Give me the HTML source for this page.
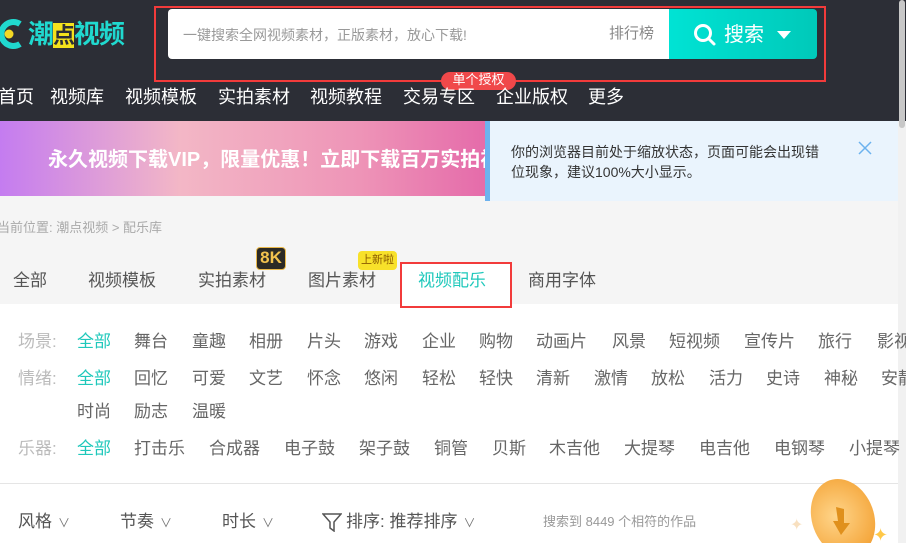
<!DOCTYPE html>
<html style="overflow:hidden;width:906px;height:543px"><head><meta charset="utf-8">
<style>
*{margin:0;padding:0;box-sizing:border-box}
body{width:906px;height:543px;overflow:hidden;background:#f5f5f5;font-family:"Liberation Sans","Noto Sans CJK SC",sans-serif;position:relative}
.a{position:absolute;white-space:nowrap}
#hd{position:absolute;left:0;top:0;width:906px;height:121px;background:#2c2e36}
.nav{top:85px;font-size:18px;color:#fff;line-height:24px}
.f{font-size:17px;color:#666;line-height:22px}
.t{color:#1fc8bb}
.tab{top:270px;font-size:17px;color:#555;line-height:22px}
.ch{font-size:12px;color:#777;margin-left:6px}
</style></head><body>
<div id="hd"></div>
<svg class="a" style="left:0;top:18px" width="24" height="32" viewBox="0 0 24 32"><path d="M20 6 A12 12 0 1 0 20 26" stroke="#20d9cf" stroke-width="6" fill="none"/><circle cx="9" cy="16" r="4.5" fill="#f4d825"/></svg>
<div class="a" style="left:28px;top:17px;font-size:26px;font-weight:bold;color:#20d9cf;line-height:34px;letter-spacing:-1px">潮<span style="background:#f4e21c;color:#2c2e36;font-size:22px">点</span>视频</div>
<div class="a" style="left:154px;top:6px;width:672px;height:76px;border:2px solid #f23b3b"></div>
<div class="a" style="left:168px;top:9px;width:501px;height:50px;background:#fff;border-radius:4px 0 0 4px"></div>
<div class="a" style="left:183px;top:25px;font-size:14px;color:#999;line-height:20px">一键搜索全网视频素材，正版素材，放心下载!</div>
<div class="a" style="left:609px;top:24px;font-size:15px;color:#888;line-height:20px">排行榜</div>
<div class="a" style="left:669px;top:9px;width:148px;height:50px;background:linear-gradient(90deg,#00e3d4,#00c9b9);border-radius:0 4px 4px 0"></div>
<svg class="a" style="left:693px;top:23px" width="24" height="24" viewBox="0 0 24 24"><circle cx="10" cy="10" r="7.5" stroke="#fff" stroke-width="3" fill="none"/><path d="M15.5 15.5 L21 21" stroke="#fff" stroke-width="3" stroke-linecap="round"/></svg>
<div class="a" style="left:724px;top:22px;font-size:20px;color:#fff;line-height:26px">搜索</div>
<div class="a" style="left:777px;top:31px;width:0;height:0;border-left:7px solid transparent;border-right:7px solid transparent;border-top:8px solid #fff"></div>
<div class="a" style="left:441px;top:72px;width:75px;height:18px;background:#f0484a;border-radius:9px;color:#fff;font-size:13px;line-height:16px;text-align:center;overflow:hidden">单个授权</div>
<div class="a nav" style="left:-2px">首页</div>
<div class="a nav" style="left:50px">视频库</div>
<div class="a nav" style="left:125px">视频模板</div>
<div class="a nav" style="left:218px">实拍素材</div>
<div class="a nav" style="left:310px">视频教程</div>
<div class="a nav" style="left:403px">交易专区</div>
<div class="a nav" style="left:496px">企业版权</div>
<div class="a nav" style="left:588px">更多</div>
<div class="a" style="left:0;top:121px;width:900px;height:75px;background:linear-gradient(90deg,#c47cf0 0%,#f3b7c6 20%,#ee94b7 40%,#e468a9 55%,#e468a9 100%)"></div>
<div class="a" style="left:48px;top:147px;font-size:20px;font-weight:bold;color:#fff;line-height:26px">永久视频下载VIP，限量优惠！立即下载百万实拍视</div>
<div class="a" style="left:485px;top:121px;width:413px;height:80px;background:#eaf4fd;border-left:5px solid #6cb2ee"></div>
<div class="a" style="left:511px;top:142px;font-size:14px;color:#333;line-height:20px;white-space:normal;width:312px">你的浏览器目前处于缩放状态，页面可能会出现错位现象，建议100%大小显示。</div>
<svg class="a" style="left:858px;top:141px" width="14" height="14" viewBox="0 0 14 14"><path d="M1 1L13 13M13 1L1 13" stroke="#6cb2ee" stroke-width="1.5"/></svg>
<div class="a" style="left:898px;top:121px;width:8px;height:422px;background:#f1f1f1"></div>
<div class="a" style="left:899px;top:0;width:6px;height:128px;background:#c8c8c8;border-radius:3px"></div>
<div class="a" style="left:-3px;top:219px;font-size:13px;color:#aaa;line-height:18px">当前位置: 潮点视频 &gt; 配乐库</div>
<div class="a" style="left:0;top:304px;width:898px;height:239px;background:#fff"></div>
<div class="a" style="left:400px;top:262px;width:112px;height:46px;background:#fff;border:2px solid #f23b3b"></div>
<div class="a tab" style="left:13px">全部</div>
<div class="a tab" style="left:88px">视频模板</div>
<div class="a tab" style="left:198px">实拍素材</div>
<div class="a tab" style="left:308px">图片素材</div>
<div class="a tab" style="left:418px;color:#1fc8bb">视频配乐</div>
<div class="a tab" style="left:528px">商用字体</div>
<div class="a" style="left:256px;top:247px;width:30px;height:23px;background:#2c2a25;border:1.5px solid #e9b84a;border-radius:4px;color:#f2c24e;font-weight:bold;font-size:17px;line-height:20px;text-align:center">8K</div>
<div class="a" style="left:358px;top:251px;width:39px;height:19px;background:#f8e12a;border-radius:4px;color:#8a5a00;font-size:11px;line-height:19px;text-align:center">上新啦</div>
<div class="a f" style="left:18px;top:331px;color:#bbb">场景:</div>
<div class="a f t" style="left:77px;top:331px">全部</div>
<div class="a f" style="left:134px;top:331px">舞台</div><div class="a f" style="left:192px;top:331px">童趣</div><div class="a f" style="left:249px;top:331px">相册</div><div class="a f" style="left:307px;top:331px">片头</div><div class="a f" style="left:364px;top:331px">游戏</div><div class="a f" style="left:422px;top:331px">企业</div><div class="a f" style="left:479px;top:331px">购物</div><div class="a f" style="left:536px;top:331px">动画片</div><div class="a f" style="left:612px;top:331px">风景</div><div class="a f" style="left:669px;top:331px">短视频</div><div class="a f" style="left:744px;top:331px">宣传片</div><div class="a f" style="left:818px;top:331px">旅行</div><div class="a f" style="left:877px;top:331px">影视</div>
<div class="a f" style="left:18px;top:368px;color:#bbb">情绪:</div>
<div class="a f t" style="left:77px;top:368px">全部</div>
<div class="a f" style="left:134px;top:368px">回忆</div><div class="a f" style="left:192px;top:368px">可爱</div><div class="a f" style="left:249px;top:368px">文艺</div><div class="a f" style="left:307px;top:368px">怀念</div><div class="a f" style="left:364px;top:368px">悠闲</div><div class="a f" style="left:422px;top:368px">轻松</div><div class="a f" style="left:479px;top:368px">轻快</div><div class="a f" style="left:536px;top:368px">清新</div><div class="a f" style="left:594px;top:368px">激情</div><div class="a f" style="left:651px;top:368px">放松</div><div class="a f" style="left:709px;top:368px">活力</div><div class="a f" style="left:766px;top:368px">史诗</div><div class="a f" style="left:824px;top:368px">神秘</div><div class="a f" style="left:881px;top:368px">安静</div>
<div class="a f" style="left:77px;top:401px">时尚</div><div class="a f" style="left:134px;top:401px">励志</div><div class="a f" style="left:192px;top:401px">温暖</div>
<div class="a f" style="left:18px;top:438px;color:#bbb">乐器:</div>
<div class="a f t" style="left:77px;top:438px">全部</div>
<div class="a f" style="left:134px;top:438px">打击乐</div><div class="a f" style="left:209px;top:438px">合成器</div><div class="a f" style="left:284px;top:438px">电子鼓</div><div class="a f" style="left:359px;top:438px">架子鼓</div><div class="a f" style="left:434px;top:438px">铜管</div><div class="a f" style="left:492px;top:438px">贝斯</div><div class="a f" style="left:549px;top:438px">木吉他</div><div class="a f" style="left:624px;top:438px">大提琴</div><div class="a f" style="left:699px;top:438px">电吉他</div><div class="a f" style="left:774px;top:438px">电钢琴</div><div class="a f" style="left:849px;top:438px">小提琴</div>
<div class="a" style="left:0;top:483px;width:898px;height:1px;background:#e5e5e5"></div>
<div class="a f" style="left:18px;top:511px;color:#555">风格<span class="ch">∨</span></div>
<div class="a f" style="left:120px;top:511px;color:#555">节奏<span class="ch">∨</span></div>
<div class="a f" style="left:222px;top:511px;color:#555">时长<span class="ch">∨</span></div>
<svg class="a" style="left:322px;top:513px" width="20" height="19" viewBox="0 0 20 19"><path d="M1 1H19L12 9V18L8 15V9Z" stroke="#555" stroke-width="1.5" fill="none"/></svg>
<div class="a f" style="left:346px;top:511px;color:#555">排序: 推荐排序<span class="ch">∨</span></div>
<div class="a" style="left:543px;top:513px;font-size:13px;color:#999;line-height:18px">搜索到 8449 个相符的作品</div>
<div class="a" style="left:812px;top:478px;width:62px;height:80px;border-radius:50%;background:radial-gradient(circle at 40% 45%,#ffd58a,#f5a940 70%,#e58a2a);transform:rotate(-20deg)"></div>
<svg class="a" style="left:830px;top:505px" width="24" height="34" viewBox="0 0 24 34"><path d="M6 2L14 4L14 18L20 18L11 30L3 16L8 16Z" fill="#e0901c"/></svg>
<div class="a" style="left:790px;top:515px;font-size:16px;color:#f8e0c0">✦</div>
<div class="a" style="left:873px;top:525px;font-size:18px;color:#ffc848">✦</div>
</body></html>
